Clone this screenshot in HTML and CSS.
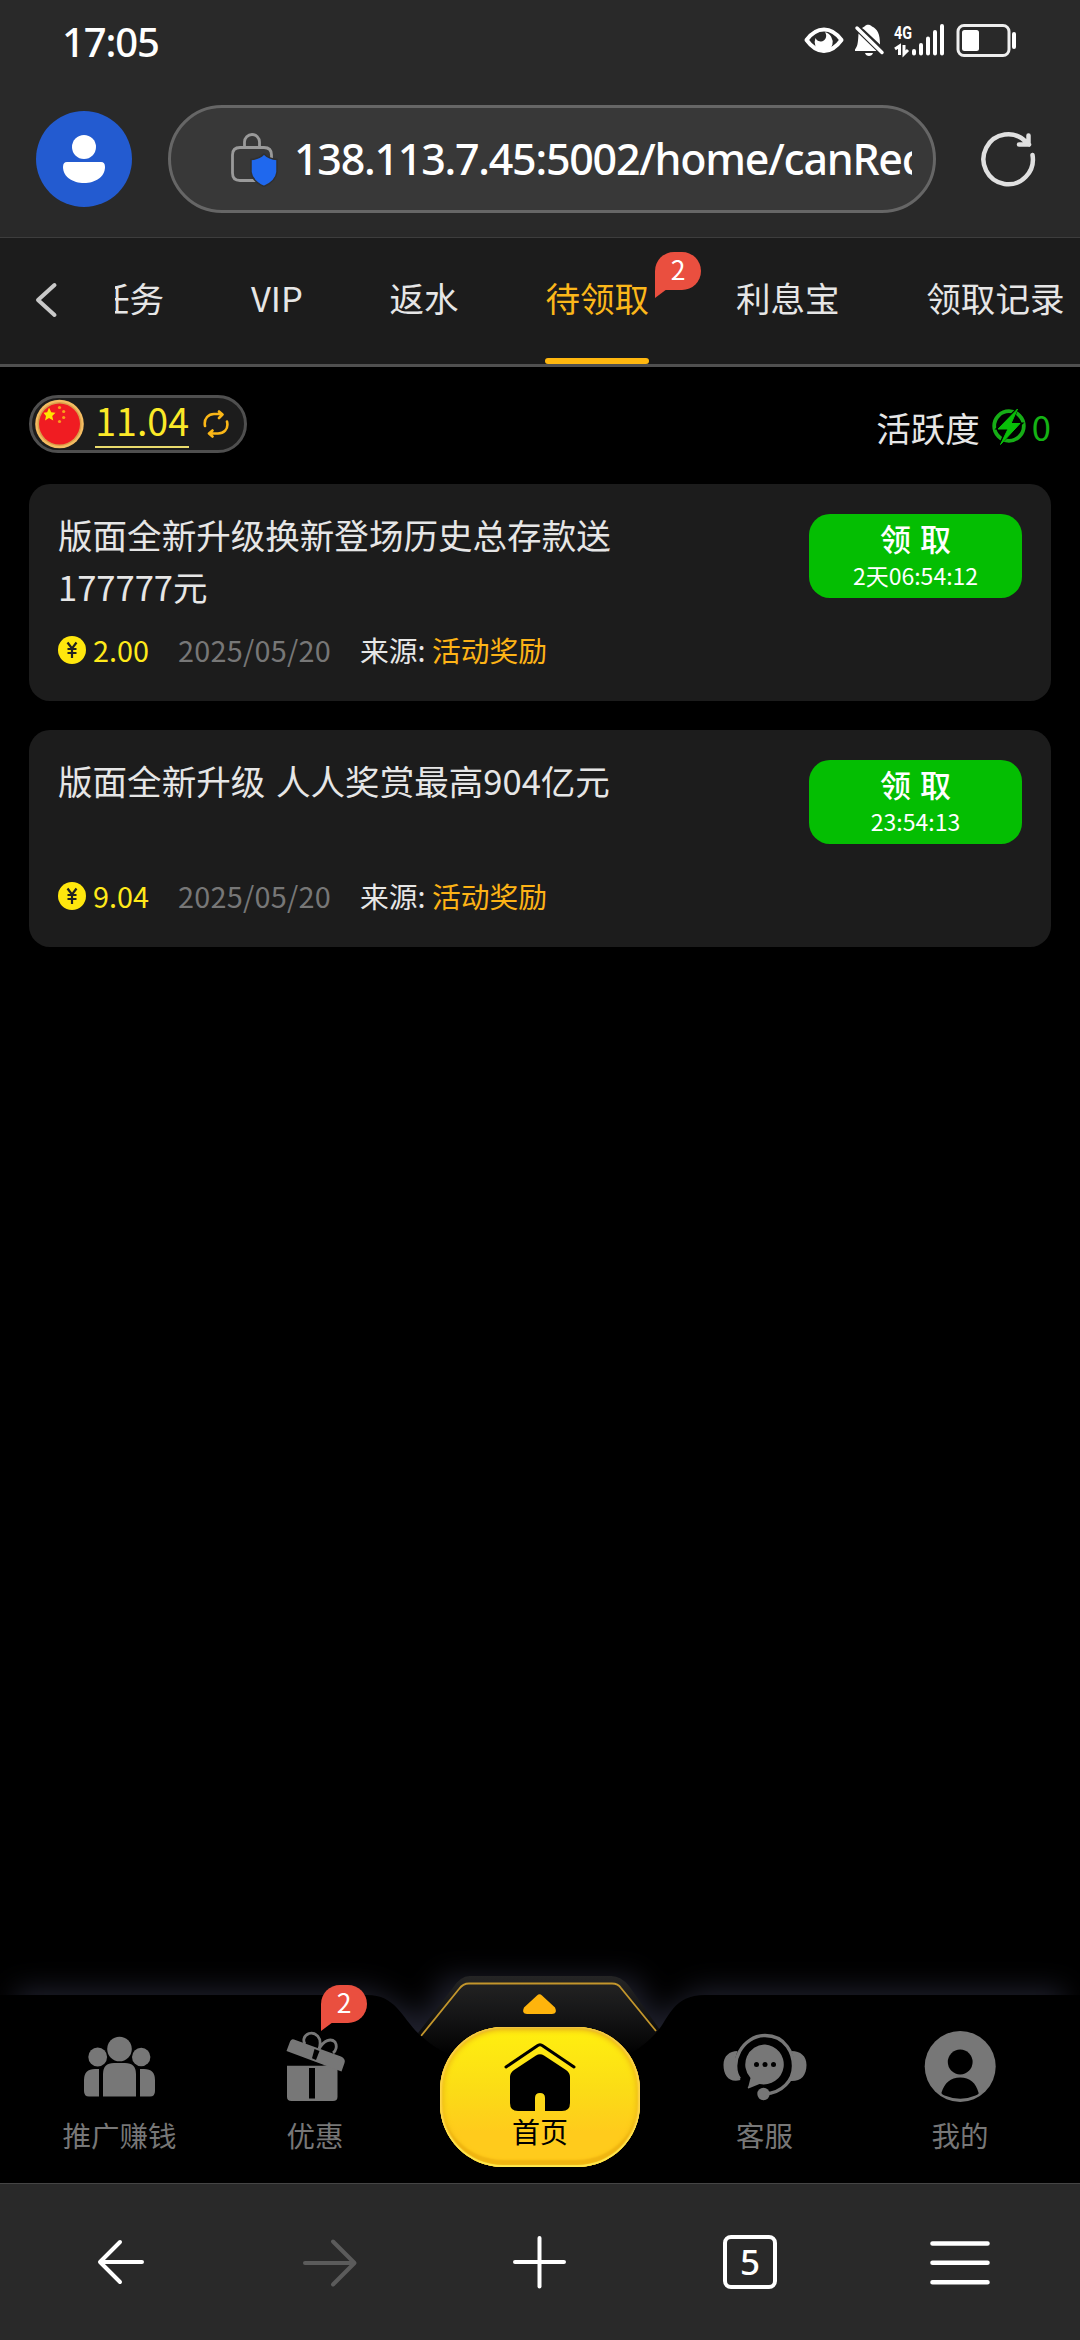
FILE: index.html
```html
<!DOCTYPE html>
<html lang="zh-CN">
<head>
<meta charset="utf-8">
<title>待领取</title>
<link rel="stylesheet" href="styles.css">
</head>
<body>
<div class="screen">
  <header class="browser-head">
    <div class="status">
      <span class="clock">17:05</span>
      <svg class="status-icons" viewBox="800 20 220 40" width="220" height="40">
        <path d="M806.500 40C812 32.500 817.500 29.500 824 29.500S836 32.500 841.500 40C836 47.500 830.500 51 824 51S812 47.500 806.500 40Z" fill="none" stroke="#fff" stroke-width="4" stroke-linejoin="round"/>
        <path d="M815.500 38A9 10 0 1 0 825 32.300C828 36 825 42 820.500 41.500 817.500 41 816 39.500 815.500 38Z" fill="#fff"/>
        <path d="M864 29.500L880 44.500C880 34 877.500 29 872 26.500 870 24 866 24 864.500 26.500L862 28ZM858.500 33.500C858 41 858 46 855 49.500V51H876.500ZM865 53H873C872 57 866 57 865 53Z" fill="#fff"/>
        <path d="M857 28L882 52.500" stroke="#fff" stroke-width="3.500" stroke-linecap="round"/>
        <text class="signal-label" x="894" y="38.500" textLength="18" lengthAdjust="spacingAndGlyphs">4G</text>
        <path d="M895 49L899.500 46V55M904 45V54L908 50" fill="none" stroke="#fff" stroke-width="3"/>
        <path d="M914 51V53.500M921 45V53.500M928 38.500V53.500M935 32V53.500M942 26V53.500" stroke="#fff" stroke-width="4" stroke-linecap="round"/>
        <rect x="958" y="25.500" width="51" height="30" rx="6" fill="none" stroke="#eee" stroke-width="3"/>
        <rect x="962" y="30" width="17" height="21" rx="2.500" fill="#fff"/>
        <path d="M1014 34V47" stroke="#fff" stroke-width="4" stroke-linecap="round"/>
      </svg>
    </div>
    <div class="address-row">
      <svg class="avatar" viewBox="36 111 96 96" width="96" height="96">
        <circle cx="84" cy="159" r="48" fill="#235bd0"/>
        <circle cx="84" cy="147" r="12" fill="#fff"/>
        <path d="M67 162H101Q105 162 105 167C105 177 95 183 84 183S63 177 63 167Q63 162 67 162Z" fill="#fff"/>
      </svg>
      <div class="url-pill">
        <svg class="lock" viewBox="228 132 52 56" width="52" height="56">
          <path d="M244.500 147V143A7.500 7.500 0 0 1 259.500 143V147M271.500 160V156Q271.500 148.500 264 148.500H240Q232.500 148.500 232.500 156V174Q232.500 181.500 240 181.500H262" fill="none" stroke="#9a9a9a" stroke-width="2.800"/>
          <path d="M264 155Q269 160 277 160.500V173Q276 182 264 187.500 252 182 251 173V160.500Q259 160 264 155Z" fill="#1f68ee" stroke="#303030" stroke-width="1.500"/>
        </svg>
        <span class="url">138.113.7.45:5002/home/canRec</span>
      </div>
      <svg class="reload" viewBox="978 129 60 60" width="60" height="60" fill="none" stroke="#e0e0e0" stroke-width="4.500" stroke-linecap="round" stroke-linejoin="round">
        <path d="M1032.500 155A24.700 25 0 1 1 1026 142L1029 144.500M1028.500 135.500V144.500H1019"/>
      </svg>
    </div>
  </header>

  <nav class="tabs">
    <svg class="back" viewBox="30 280 32 40" width="32" height="40"><path d="M54.500 285L38 300 54.500 315" fill="none" stroke="#c9c9c9" stroke-width="4" stroke-linecap="round" stroke-linejoin="round"/></svg>
    <div class="tab-strip">
      <span class="tab">任务</span>
      <span class="tab">VIP</span>
      <span class="tab">返水</span>
      <span class="tab active">待领取</span>
      <span class="tab">利息宝</span>
      <span class="tab">领取记录</span>
    </div>
    <span class="badge tab-badge">2</span>
  </nav>

  <main class="content">
    <div class="summary">
      <div class="balance">
        <svg class="flag" viewBox="35 400 49 50" width="49" height="50">
          <circle cx="59.500" cy="425" r="24.300" fill="#f5bd62"/>
          <circle cx="59.500" cy="425" r="22" fill="#d9a04a"/>
          <circle cx="59.500" cy="425" r="20.500" fill="#f01c22"/>
          <path d="M49 408.500L51.200 413.200 55.500 413.700 52.200 417 53.300 421.500 49 419 45 421.500 46 417 43.500 413.700 47.200 413.200Z" fill="#ffe600"/>
          <g fill="#f9a01c"><circle cx="59.500" cy="408.500" r="1.600"/><circle cx="63.700" cy="412.500" r="1.600"/><circle cx="63.700" cy="418.500" r="1.600"/><circle cx="59.500" cy="422.500" r="1.600"/></g>
        </svg>
        <span class="amount">11.04</span>
        <svg class="swap" viewBox="202 410 28 28" width="28" height="28" fill="none" stroke="#fbb717" stroke-width="2.600" stroke-linecap="round" stroke-linejoin="round">
          <path d="M205 426C203.500 418 209 414 214 414H222M219 411.500L222.500 414.500 219 418M227 421.500C229 430 223 433.500 218 433.500H210M212.500 430.500L209 433.500 212.500 436.500"/>
        </svg>
      </div>
      <div class="activity">
        <span>活跃度</span>
        <svg viewBox="990 409 36 38" width="36" height="38">
          <circle cx="1008" cy="427" r="14.800" fill="none" stroke="#16ad16" stroke-width="3.800"/>
          <path d="M1017.500 407L993.500 430.500H1004L997 448 1023.500 423.500H1013Z" fill="#000"/>
          <path d="M1016.500 410L997 430H1007L999.500 445.500 1019 424.500H1010Z" fill="#08bf08" stroke="#08bf08" stroke-width="1"/>
        </svg>
        <span class="points">0</span>
      </div>
    </div>

    <article class="card">
      <div class="card-info">
        <h2 class="card-title">版面全新升级换新登场历史总存款送177777元</h2>
        <div class="meta">
          <svg class="coin" viewBox="0 0 28 28" width="28" height="28"><circle cx="14" cy="14" r="14" fill="#ffe70d"/><path d="M9.500 6.500L14 12.500 18.500 6.500M14 12.500V22M9.500 13H18.500M9.500 17H18.500" fill="none" stroke="#222" stroke-width="2.200"/></svg>
          <span class="value">2.00</span>
          <span class="date">2025/05/20</span>
          <span class="source">来源: <span class="source-name">活动奖励</span></span>
        </div>
      </div>
      <div class="claim"><span class="claim-label">领 取</span><span class="claim-time">2天06:54:12</span></div>
    </article>

    <article class="card">
      <div class="card-info">
        <h2 class="card-title">版面全新升级 人人奖赏最高904亿元</h2>
        <div class="meta">
          <svg class="coin" viewBox="0 0 28 28" width="28" height="28"><circle cx="14" cy="14" r="14" fill="#ffe70d"/><path d="M9.500 6.500L14 12.500 18.500 6.500M14 12.500V22M9.500 13H18.500M9.500 17H18.500" fill="none" stroke="#222" stroke-width="2.200"/></svg>
          <span class="value">9.04</span>
          <span class="date">2025/05/20</span>
          <span class="source">来源: <span class="source-name">活动奖励</span></span>
        </div>
      </div>
      <div class="claim"><span class="claim-label">领 取</span><span class="claim-time">23:54:13</span></div>
    </article>
  </main>

  <nav class="app-nav">
    <svg class="nav-shape" viewBox="0 1923 1080 260" width="1080" height="260">
      <defs>
        <filter id="glow" x="-10%" y="-40%" width="120%" height="180%" color-interpolation-filters="sRGB"><feGaussianBlur stdDeviation="14"/></filter>
        <linearGradient id="hex" x1="0" y1="0" x2="0" y2="1"><stop offset="0" stop-color="#252525"/><stop offset=".45" stop-color="#141415"/><stop offset=".85" stop-color="#000"/></linearGradient>
      </defs>
      <path d="M16 1990H370L425 2020 445 1978H635L655 2020 700 1990H1064V2100H16Z" fill="#20212e" filter="url(#glow)"/>
      <path d="M418 2033L452 1989Q460 1976 470 1976H611Q621 1976 629 1986L660 2030 635 2070H445Z" fill="url(#hex)"/>
      <path d="M421 2036L459 1989Q463 1983.500 469 1983.500H612Q618 1983.500 621 1988L656 2031" fill="none" stroke="#c3962c" stroke-width="1.800"/>
      <path d="M0 1995H367C396 1995 401 2017 420 2035C434 2048 446 2054 460 2058H622C636 2051 645 2045 657 2032C669 2018 673 1995 705 1995H1080V2183H0Z" fill="#000"/>
      <path d="M537 1995.500Q539.500 1993 542 1995.500L555 2007.500Q558 2014 552 2014H527Q521 2014 524 2007.500Z" fill="#ffb40c"/>
    </svg>
    <div class="nav-item">
      <svg viewBox="70 2028 100 76" width="100" height="76" fill="#777">
        <circle cx="119.500" cy="2049" r="12.300"/><circle cx="97.700" cy="2057" r="9.400"/><circle cx="141.200" cy="2057" r="9.200"/>
        <path d="M103 2096.500V2074Q103 2063 114 2063H125Q136 2063 136 2074V2096.500ZM99 2069V2096.500H89Q84 2096.500 84 2091V2080Q84 2069 95 2069ZM140 2069V2096.500H150Q155 2096.500 155 2091V2080Q155 2069 144 2069Z"/>
      </svg>
      <span>推广赚钱</span>
    </div>
    <div class="nav-item">
      <svg viewBox="265 2028 100 76" width="100" height="76" fill="#777">
        <path d="M287 2065.500H337.500V2097Q337.500 2101 333 2101H291.500Q287 2101 287 2097Z"/>
        <path d="M309 2068H315V2098.500H309Z" fill="#000"/>
        <path d="M294 2039.500L341 2056.500Q346 2059 344.500 2063L341.500 2071.500 286.500 2051 289.500 2043Q291 2038.500 294 2039.500Z"/>
        <path d="M287 2053L324 2065.500H287Z" fill="#000"/>
        <path d="M314.500 2049L319.500 2051 316 2060 312 2058.300Z" fill="#000"/>
        <path d="M319 2049C323 2037 315 2032 309 2033.500 303 2036 303 2041 305 2044M319 2049C324 2040 331 2038 335 2042 337.500 2046 336 2051 333 2053" fill="none" stroke="#777" stroke-width="2.800"/>
      </svg>
      <span>优惠</span>
      <span class="badge gift-badge">2</span>
    </div>
    <div class="home-button">
      <svg viewBox="500 2039 80 76" width="80" height="76">
        <path d="M506 2067L537 2046Q540 2043.500 543 2046L574 2067" fill="none" stroke="#000" stroke-width="3" stroke-linecap="round"/>
        <path d="M536 2055.500Q540 2053 544 2055.500L566 2070Q570 2073 570 2077V2103Q570 2111 562 2111H545V2098Q545 2093 540 2093T535 2098V2111H518Q510 2111 510 2103V2077Q510 2073 514 2070Z"/>
      </svg>
      <span>首页</span>
    </div>
    <div class="nav-item">
      <svg viewBox="714.500 2028 100 76" width="100" height="76" fill="#777">
        <path d="M739 2079C728 2063 742 2035.500 764.500 2035.500 786 2035.500 793 2055 793 2066 793 2080 782 2093 764 2094" fill="none" stroke="#777" stroke-width="3.400"/>
        <path d="M737 2051C729 2051 723 2056 723 2065C723 2076 729 2083 740 2080Q731 2066 737 2051ZM791 2051C800 2051 806 2056 806 2065C806 2076 800 2082 789 2081Q797 2066 791 2051Z"/>
        <circle cx="763" cy="2094" r="6.200"/>
        <path d="M764.500 2044.500A20 20 0 1 1 759 2084L748 2088.500Q746.500 2088 748 2086L750 2078A20 20 0 0 1 764.500 2044.500Z"/>
        <g fill="#000"><circle cx="756" cy="2064.500" r="2.500"/><circle cx="764.500" cy="2064.500" r="2.500"/><circle cx="773" cy="2064.500" r="2.500"/></g>
      </svg>
      <span>客服</span>
    </div>
    <div class="nav-item">
      <svg viewBox="910.500 2028 100 76" width="100" height="76">
        <circle cx="960.700" cy="2066.500" r="35.500" fill="#777"/>
        <circle cx="960.700" cy="2062" r="12.400"/>
        <path d="M942 2092.500C945 2083 951 2077.500 960.700 2077.500S976.500 2083 979 2092.500Q980 2094 976 2095.500 961 2102 945 2095.500 941.500 2094 942 2092.500Z"/>
      </svg>
      <span>我的</span>
    </div>
  </nav>

  <footer class="browser-bar">
    <svg viewBox="91 2231 60 60" width="60" height="60" fill="none" stroke="#fff" stroke-width="4" stroke-linecap="round" stroke-linejoin="round"><path d="M121 2241L101 2261 121 2281M102 2261H143"/></svg>
    <svg viewBox="300 2231 60 60" width="60" height="60" fill="none" stroke="#5b5b5b" stroke-width="4" stroke-linecap="round" stroke-linejoin="round"><path d="M333 2240.500L354.500 2262 333 2283.500M305 2262H354"/></svg>
    <svg viewBox="510 2231 60 60" width="60" height="60" fill="none" stroke="#fff" stroke-width="4" stroke-linecap="round"><path d="M515 2261H564M539.500 2237V2285.500"/></svg>
    <span class="tab-count">5</span>
    <svg viewBox="930 2232 60 60" width="60" height="60" fill="none" stroke="#fff" stroke-width="4.600" stroke-linecap="round"><path d="M932.500 2243.500H987.500M932.500 2262.700H987.500M932.500 2282.200H987.500"/></svg>
  </footer>
</div>
</body>
</html>
```
FILE: styles.css
```css
* {
  box-sizing: border-box;
}

body {
  margin: 0;
  background: #000;
  font-family: "Noto Sans CJK SC", sans-serif;
  color: #e6e6e6;
}

svg {
  display: block;
  flex: none;
}

.screen {
  width: 1080px;
  height: 2340px;
  display: flex;
  flex-direction: column;
  overflow: hidden;
}

/* Browser chrome */
.browser-head {
  height: 238px;
  flex: none;
  background: #292929;
  border-bottom: 1px solid #3d3d3d;
}

.status {
  height: 105px;
  padding: 20px 60px 0 62px;
  display: flex;
  justify-content: space-between;
}

.clock {
  font: 500 40px/44px "Noto Sans", sans-serif;
  letter-spacing: -1.1px;
  color: #fff;
}

.signal-label {
  font: 700 18px "Roboto", sans-serif;
  fill: #fff;
}

.address-row {
  display: flex;
  align-items: center;
  padding-left: 36px;
}

.url-pill {
  width: 768px;
  height: 108px;
  margin: 0 42px 0 36px;
  padding: 0 21px 0 57px;
  display: flex;
  align-items: center;
  gap: 14px;
  border: 3px solid #666;
  border-radius: 54px;
  background: #383838;
}

.url {
  flex: 1;
  overflow: hidden;
  white-space: nowrap;
  font: 500 43px/60px "Noto Sans", sans-serif;
  letter-spacing: -1.25px;
  color: #fff;
}

/* Page tabs */
.tabs {
  position: relative;
  flex: none;
  height: 129px;
  padding-left: 30px;
  display: flex;
  align-items: center;
  background: #1c1c1c;
  border-bottom: 3px solid #505050;
}

.back {
  margin-bottom: 2px;
}

.tab-strip {
  flex: 1;
  align-self: stretch;
  margin-left: 53px;
  display: flex;
  gap: 86.8px;
  overflow: hidden;
}

.tab {
  flex: none;
  font-size: 34.56px;
  line-height: 118px;
  white-space: nowrap;
}

.tab:first-child {
  margin-left: -20px;
}

.tab.active {
  position: relative;
  color: #fbb71a;
}

.tab.active::after {
  content: "";
  position: absolute;
  left: 0;
  right: 0;
  bottom: 0;
  height: 6px;
  border-radius: 3px;
  background: #ffb70f;
}

.badge {
  position: absolute;
  width: 46px;
  height: 38px;
  border-radius: 19px 19px 19px 0;
  background: #ea4f3f;
  color: #fff;
  font-size: 26.5px;
  line-height: 34px;
  text-align: center;
}

.badge::after {
  content: "";
  position: absolute;
  left: 0;
  top: 37px;
  border-top: 9px solid #ea4f3f;
  border-right: 12px solid transparent;
}

.tab-badge {
  left: 655px;
  top: 14px;
}

/* Content */
.content {
  flex: 1;
  padding: 0 29px;
}

.summary {
  height: 117px;
  padding-top: 28px;
  display: flex;
  justify-content: space-between;
  align-items: flex-start;
}

.balance {
  width: 218px;
  height: 58px;
  padding-left: 3px;
  display: flex;
  align-items: center;
  border: 3px solid #4f4f4f;
  border-radius: 29px;
  background: #1c1c1c;
}

.amount {
  width: 94px;
  height: 47px;
  margin: 0 13px 0 11px;
  border-bottom: 2px solid #eadb6c;
  font-size: 37.5px;
  line-height: 38px;
  text-align: right;
  color: #fbe928;
}

.activity {
  display: flex;
  align-items: center;
  margin-top: 9px;
  font-size: 34.56px;
  line-height: 46px;
}

.activity svg {
  margin: 0 5px 0 11px;
}

.points {
  margin-top: -3px;
  color: #14b314;
}

.card {
  height: 217px;
  margin-bottom: 29px;
  padding: 0 29px;
  display: flex;
  justify-content: space-between;
  border-radius: 21px;
  background: #1c1c1c;
}

.card-info {
  width: 570px;
  padding-top: 24px;
}

.card-title {
  height: 122px;
  margin: 0;
  font-size: 34.56px;
  font-weight: 400;
  line-height: 52px;
  word-spacing: 3px;
}

.meta {
  display: flex;
  align-items: center;
  font-size: 28.8px;
  line-height: 40px;
  white-space: nowrap;
}

.value {
  margin: 0 29px 0 7px;
  color: #ffe91a;
}

.date {
  margin-right: 29px;
  letter-spacing: 0.25px;
  color: #777;
}

.source-name {
  color: #fdb316;
}

.claim {
  width: 213px;
  height: 84px;
  margin-top: 30px;
  padding-top: 5px;
  display: flex;
  flex-direction: column;
  align-items: center;
  border-radius: 21px;
  background: #04be02;
  color: #fff;
}

.claim-label {
  font-size: 31px;
  font-weight: 500;
  line-height: 38px;
  word-spacing: 2px;
}

.claim-time {
  font-size: 23px;
  line-height: 36px;
}

/* Application navigation */
.app-nav {
  position: relative;
  flex: none;
  height: 188px;
  padding: 0 22px;
  display: grid;
  grid-template-columns: 195px 196px 254px 195px 196px;
}

.nav-shape {
  position: absolute;
  left: 0;
  bottom: 0;
}

.nav-item {
  position: relative;
  padding-top: 33px;
  display: flex;
  flex-direction: column;
  align-items: center;
  font-size: 28.5px;
  line-height: 40px;
  color: #777;
}

.nav-item span:not(.badge) {
  margin-top: 11px;
}

.gift-badge {
  left: 104px;
  top: -10px;
}

.home-button {
  position: relative;
  justify-self: center;
  width: 200px;
  height: 140px;
  margin-top: 32px;
  padding-top: 12px;
  display: flex;
  flex-direction: column;
  align-items: center;
  border-radius: 63px;
  background: linear-gradient(#fff00f, #fbdc16 45%, #ffcb1c 75%);
  box-shadow: inset 0 -2px 1px #ffe94d, inset 2px 0 2px #ffd54a, inset -2px 0 2px #ffd54a, inset 0 2px 2px #e4b536, inset 0 -7px 2px #f0b511, inset 0 0 5px 4px #eebd16;
  font-size: 28px;
  line-height: 32px;
  color: #000;
}

/* Browser toolbar */
.browser-bar {
  flex: none;
  height: 157px;
  padding: 0 15px;
  display: grid;
  grid-template-columns: repeat(5, 210px);
  place-items: center;
  background: #292929;
  border-top: 1px solid #454545;
}

.tab-count {
  width: 54px;
  height: 54px;
  border: 4px solid #fff;
  border-radius: 8px;
  color: #fff;
  font: 500 35px/45px "Noto Sans", sans-serif;
  text-align: center;
}
```
